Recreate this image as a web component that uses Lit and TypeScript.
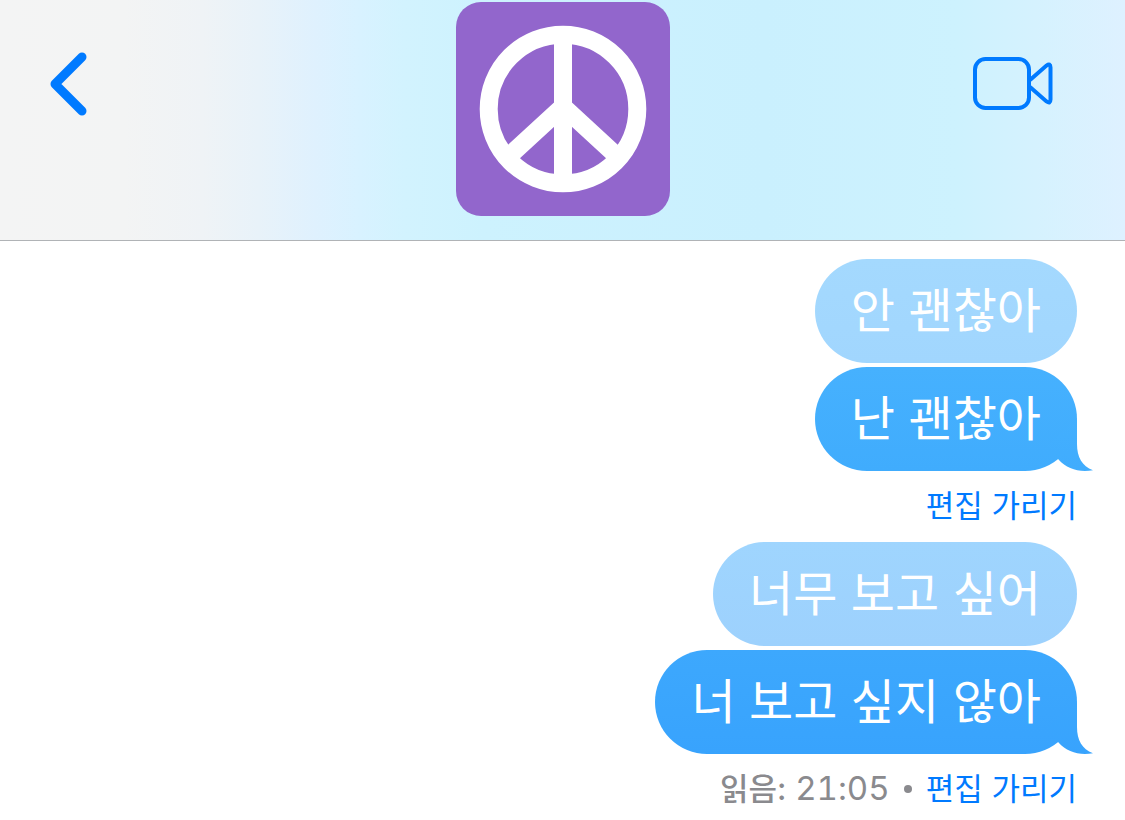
import { LitElement, html, css, svg } from "lit";
import { customElement, property } from "lit/decorators.js";

interface Thread {
  edited: string;
  current: string;
  tone: "sky" | "azure";
  receipt?: { label: string; time: string };
}

const THREADS: Thread[] = [
  { edited: "안 괜찮아", current: "난 괜찮아", tone: "sky" },
  {
    edited: "너무 보고 싶어",
    current: "너 보고 싶지 않아",
    tone: "azure",
    receipt: { label: "읽음:", time: "21:05" },
  },
];

const chevron = svg`<path d="M32 5 L5 32 L32 59" fill="none" stroke="currentColor"
  stroke-width="9" stroke-linecap="round" stroke-linejoin="round" />`;

const camera = svg`<g fill="none" stroke="currentColor" stroke-width="4">
  <rect x="2" y="3" width="54" height="49" rx="10.5" />
  <path d="M57 24 L73.5 9.6 Q77.5 6.8 77.5 11.5 V43.5 Q77.5 48.2 73.5 45.4 L57 31" />
</g>`;

const peace = svg`<rect width="214" height="214" rx="25" fill="#9266cc" />
  <g fill="none" stroke="#fff" stroke-width="18">
    <circle cx="107" cy="107" r="74.3" />
    <path d="M107 33 V181 M51 156 L107 104.5 L163 156" />
  </g>`;

@customElement("message-bubble")
export class MessageBubble extends LitElement {
  @property({ reflect: true }) tone = "sky";
  @property({ type: Boolean, reflect: true }) faded = false;

  static styles = css`
    :host {
      display: block;
      position: relative;
      max-width: 80%;
      --top: #46b1fe;
      --mid: #43affe;
      --bottom: #40acfd;
    }
    :host([tone="azure"]) {
      --top: #3da8fd;
      --mid: #3aa6fd;
      --bottom: #38a3fd;
    }
    :host([faded]) {
      --top: #a4d9fe;
      --bottom: #a1d6fe;
    }
    :host([faded][tone="azure"]) {
      --top: #9fd5fe;
      --bottom: #9dd1fd;
    }
    .body {
      margin: 0;
      padding: 24px 36px;
      border-radius: 52px;
      background: linear-gradient(var(--top), var(--bottom));
      color: #fff;
      font-size: 48px;
      line-height: 56px;
    }
    .tail {
      position: absolute;
      right: -16px;
      bottom: 0;
      width: 56px;
      height: 52px;
    }
    .from {
      stop-color: var(--mid);
    }
    .to {
      stop-color: var(--bottom);
    }
  `;

  render() {
    return html`<p class="body"><slot></slot></p>
      ${this.faded
        ? null
        : html`<svg class="tail" viewBox="0 0 56 52" aria-hidden="true">
            <defs>
              <linearGradient id="fill" gradientUnits="userSpaceOnUse" x1="0" y1="0" x2="0" y2="52">
                <stop class="from" offset="0" />
                <stop class="to" offset="1" />
              </linearGradient>
            </defs>
            <path
              fill="url(#fill)"
              d="M40 0 V25 C40 38 45 47 56 51.2 C42 53.5 30 50 21.5 40.5 L10 26 Z"
            />
          </svg>`}`;
  }
}

@customElement("app-root")
export class AppRoot extends LitElement {
  static styles = css`
    :host {
      display: block;
      min-height: 100vh;
      background: #fff;
      font-family: Inter, "Noto Sans CJK KR", sans-serif;
    }
    button {
      margin: 0;
      padding: 0;
      border: 0;
      background: none;
      color: #007aff;
      font: inherit;
      cursor: pointer;
    }
    svg {
      display: block;
    }
    .bar {
      display: grid;
      grid-template-columns: 1fr auto 1fr;
      align-items: start;
      padding: 2px 72px 24px 50px;
      border-bottom: 1px solid #b0b3b6;
      background: linear-gradient(
        90deg,
        #f4f4f4 0%,
        #f3f4f4 11%,
        #eff3f6 18%,
        #e8f2f9 23%,
        #dff1fe 28%,
        #d8f2ff 32%,
        #d2f3fe 36%,
        #cdf2fe 43%,
        #caf0fe 68%,
        #cdf2fe 85%,
        #d5f2fe 92%,
        #def1ff 100%
      );
    }
    .back,
    .call {
      padding-top: 50px;
    }
    .back {
      justify-self: start;
    }
    .call {
      justify-self: end;
    }
    .avatar {
      margin-left: 22px;
    }
    .log {
      padding: 18px 48px 0;
    }
    .thread {
      display: flex;
      flex-direction: column;
      align-items: flex-end;
    }
    .latest {
      margin-top: 4px;
    }
    .note {
      display: flex;
      align-items: center;
      gap: 14px;
      padding: 15px 0 17px;
      color: #8a8a8e;
      font-size: 31px;
      line-height: 39px;
    }
    .label {
      font-weight: 500;
    }
    time {
      font-size: 33px;
      font-variant-numeric: tabular-nums;
    }
    .dot {
      width: 8px;
      height: 8px;
      border-radius: 50%;
      background: #8a8a8e;
    }
  `;

  render() {
    return html`
      <header class="bar">
        <button class="back" aria-label="뒤로">
          <svg width="37" height="64" viewBox="0 0 37 64">${chevron}</svg>
        </button>
        <svg class="avatar" width="214" height="214" viewBox="0 0 214 214" aria-hidden="true">${peace}</svg>
        <button class="call" aria-label="영상 통화">
          <svg width="80" height="64" viewBox="0 -4 80 64">${camera}</svg>
        </button>
      </header>
      <main class="log">
        ${THREADS.map(
          (t) => html`<section class="thread">
            <message-bubble faded tone=${t.tone}>${t.edited}</message-bubble>
            <message-bubble class="latest" tone=${t.tone}>${t.current}</message-bubble>
            <div class="note">
              ${t.receipt
                ? html`<span><span class="label">${t.receipt.label}</span> <time>${t.receipt.time}</time></span>
                    <span class="dot"></span>`
                : null}
              <button>편집 가리기</button>
            </div>
          </section>`
        )}
      </main>
    `;
  }
}
